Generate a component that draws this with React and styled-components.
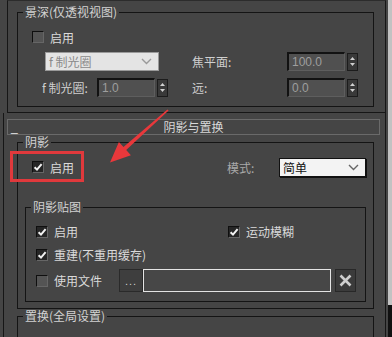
import React from 'react';
import styled, { createGlobalStyle } from 'styled-components';

const GlobalStyle = createGlobalStyle`
  html, body {
    margin: 0;
    padding: 0;
    background: #454545;
  }
  body {
    font-family: "Noto Sans CJK SC", "Noto Sans", sans-serif;
    font-size: 12px;
    color: #d6d6d6;
  }
  * { box-sizing: border-box; }
`;

const Page = styled.div`
  position: relative;
  display: flex;
  width: 392px;
  height: 337px;
  overflow: hidden;
  background: #454545;
`;

const Main = styled.div`
  width: 388px;
  display: flex;
  flex-direction: column;
`;

const ScrollStrip = styled.div`
  width: 4px;
  background: linear-gradient(#c2c2c2 0 305px, #111 305px);
`;

const TopPanel = styled.div`
  margin-left: 7px;
  width: 379px;
  border: 1px solid #161616;
  border-top-color: #2c2c2c;
  padding: 4px 11px 5px 9px;
`;

const Group = styled.fieldset`
  margin: ${({ $m }) => $m || '0'};
  padding: 0;
  min-width: 0;
  border: 1px solid #141414;
  height: ${({ $h }) => ($h ? `${$h}px` : 'auto')};
`;

const Legend = styled.legend`
  margin-left: 5px;
  padding: 0 2px;
  line-height: 14px;
  font-size: 12px;
  color: #d2d2d2;
`;

const DofGrid = styled.div`
  display: grid;
  grid-template-columns: 160px 1fr;
  grid-template-rows: 16px 19px 19px;
  row-gap: 7px;
  padding: 10px 0 9px 14px;
`;

const Cell = styled.div`
  display: flex;
  align-items: center;
  grid-column: ${({ $span }) => ($span ? '1 / span 2' : 'auto')};
  padding-left: ${({ $indent }) => $indent || 0}px;
`;

const Check = styled.label`
  display: flex;
  align-items: center;
  gap: 6px;
  color: #dadada;
  white-space: nowrap;
`;

const Box = styled.span`
  width: 12px;
  height: 12px;
  display: inline-flex;
  align-items: center;
  justify-content: center;
  border: 1px solid;
  border-color: #0f0f0f #666 #666 #0f0f0f;
  background: ${({ $checked }) => ($checked ? '#262626' : '#545454')};
`;

const Label = styled.span`
  width: ${({ $w }) => $w}px;
  color: ${({ $dim }) => ($dim ? '#a9a9a9' : '#cfcfcf')};
  white-space: nowrap;
`;

const Select = styled.div`
  width: ${({ $w }) => $w}px;
  height: 19px;
  display: flex;
  align-items: center;
  justify-content: space-between;
  padding: 0 6px 0 3px;
  background: ${({ $light }) => ($light ? '#f3f3f3' : '#e4e4e4')};
  border: 1px solid ${({ $light }) => ($light ? '#111' : '#9a9a9a')};
  box-shadow: ${({ $light }) => ($light ? '1px 1px 0 #111' : 'none')};
  color: ${({ $light }) => ($light ? '#111' : '#8a8a8a')};
  line-height: 17px;
`;

const NumberField = styled.div`
  width: 58px;
  height: 19px;
  padding-left: 3px;
  display: flex;
  align-items: center;
  background: #505050;
  border-style: solid;
  border-width: 2px 1px 1px 2px;
  border-color: #121212 #5e5e5e #5e5e5e #121212;
  color: #9e9e9e;
  font-family: "Liberation Sans", "Noto Sans", sans-serif;
  font-size: 12px;
`;

const SpinButton = styled.div`
  width: 11px;
  height: 18px;
  margin-left: 2px;
  display: flex;
  flex-direction: column;
  align-items: center;
  justify-content: center;
  gap: 3px;
  background: #393939;
  border: 1px solid #1c1c1c;
`;

const ShadowPanel = styled.div`
  flex: 1;
  margin-left: 3px;
  width: 383px;
  border-left: 1px solid #161616;
  border-right: 1px solid #161616;
`;

const RolloutHeader = styled.div`
  margin: 6px 0 0 3px;
  width: 373px;
  height: 16px;
  display: grid;
  grid-template-columns: 1fr auto 1fr;
  align-items: center;
  padding: 0 3px;
  border: 1px solid #6a6a6a;
  line-height: 14px;
  color: #d8d8d8;
`;

const Minus = styled.span`
  font-family: "Liberation Sans", sans-serif;
  font-size: 12px;
  line-height: 10px;
  color: #e0e0e0;
`;

const GroupsWrap = styled.div`
  padding: 0 11px 0 13px;
`;

const ModeRow = styled.div`
  position: relative;
  height: 20px;
  margin-top: 8px;
  padding: 0 7px 0 14px;
  display: flex;
  align-items: center;
`;

const ModeRight = styled.div`
  margin-left: auto;
  display: flex;
  align-items: center;
`;

const Highlight = styled.div`
  position: absolute;
  left: -8px;
  top: -6px;
  width: 74px;
  height: 31px;
  border: 3px solid #e0393c;
  pointer-events: none;
`;

const MapRows = styled.div`
  display: grid;
  grid-template-rows: 16px 16px 23px;
  row-gap: 7px;
  padding: 9px 9px 9px 10px;
`;

const TwoCol = styled.div`
  display: grid;
  grid-template-columns: 192px 1fr;
  align-items: center;
`;

const FileRow = styled.div`
  display: grid;
  grid-template-columns: 83px 24px 1fr 21px;
  align-items: stretch;
`;

const DotsButton = styled.div`
  display: flex;
  align-items: center;
  justify-content: center;
  background: #3e3e3e;
  border: 1px solid #2a2a2a;
  color: #cfcfcf;
  font-family: "Liberation Sans", sans-serif;
  font-size: 11px;
  letter-spacing: 1px;
`;

const FileField = styled.div`
  margin-right: 4px;
  background: #474747;
  border: 1px solid #e4e4e4;
`;

const ClearButton = styled.div`
  display: flex;
  align-items: center;
  justify-content: center;
  background: #3b3b3b;
  border: 1px solid #282828;
`;

const Arrow = styled.svg`
  position: absolute;
  left: 0;
  top: 0;
  pointer-events: none;
`;

const CheckMark = () => (
  <svg width="10" height="10" viewBox="0 0 10 10">
    <path d="M1.6 5.2 L4 7.6 L8.6 2.2" fill="none" stroke="#f2f2f2" strokeWidth="2" />
  </svg>
);

const Chevron = ({ color }) => (
  <svg width="11" height="7" viewBox="0 0 11 7">
    <path d="M1 1 L5.5 5.5 L10 1" fill="none" stroke={color} strokeWidth="1.4" />
  </svg>
);

const Checkbox = ({ checked, children }) => (
  <Check>
    <Box $checked={checked}>{checked && <CheckMark />}</Box>
    {children}
  </Check>
);

const Spinner = () => (
  <SpinButton>
    <svg width="5" height="3" viewBox="0 0 5 3"><path d="M0 3 L2.5 0 L5 3 Z" fill="#d0d0d0" /></svg>
    <svg width="5" height="3" viewBox="0 0 5 3"><path d="M0 0 L2.5 3 L5 0 Z" fill="#d0d0d0" /></svg>
  </SpinButton>
);

const App = () => (
  <Page>
    <GlobalStyle />
    <Main>
      <TopPanel>
        <Group>
          <Legend>景深(仅透视视图)</Legend>
          <DofGrid>
            <Cell $span>
              <Checkbox>启用</Checkbox>
            </Cell>
            <Cell $indent={13}>
              <Select $w={114}>
                <span>f 制光圈</span>
                <Chevron color="#9a9a9a" />
              </Select>
            </Cell>
            <Cell>
              <Label $w={95}>焦平面:</Label>
              <NumberField>100.0</NumberField>
              <Spinner />
            </Cell>
            <Cell $indent={10}>
              <Label $w={55}>f 制光圈:</Label>
              <NumberField>1.0</NumberField>
              <Spinner />
            </Cell>
            <Cell>
              <Label $w={95}>远:</Label>
              <NumberField>0.0</NumberField>
              <Spinner />
            </Cell>
          </DofGrid>
        </Group>
      </TopPanel>

      <ShadowPanel>
        <RolloutHeader>
          <Minus>_</Minus>
          <span>阴影与置换</span>
          <span />
        </RolloutHeader>
        <GroupsWrap>
          <Group>
            <Legend>阴影</Legend>
            <ModeRow>
              <Checkbox checked>启用</Checkbox>
              <Highlight />
              <ModeRight>
                <Label $w={52} $dim>模式:</Label>
                <Select $w={87} $light>
                  <span>简单</span>
                  <Chevron color="#666" />
                </Select>
              </ModeRight>
            </ModeRow>
            <Group $m="23px 7px 6px 7px">
              <Legend>阴影贴图</Legend>
              <MapRows>
                <TwoCol>
                  <Checkbox checked>启用</Checkbox>
                  <Checkbox checked>运动模糊</Checkbox>
                </TwoCol>
                <TwoCol>
                  <Checkbox checked>重建(不重用缓存)</Checkbox>
                </TwoCol>
                <FileRow>
                  <Checkbox>使用文件</Checkbox>
                  <DotsButton>...</DotsButton>
                  <FileField />
                  <ClearButton>
                    <svg width="13" height="13" viewBox="0 0 13 13">
                      <path d="M1.5 1.5 L11.5 11.5 M11.5 1.5 L1.5 11.5" stroke="#cfcfcf" strokeWidth="2.6" />
                    </svg>
                  </ClearButton>
                </FileRow>
              </MapRows>
            </Group>
          </Group>
          <Group $h={40}>
            <Legend>置换(全局设置)</Legend>
          </Group>
        </GroupsWrap>
      </ShadowPanel>
    </Main>
    <ScrollStrip />

    <Arrow width="392" height="337" viewBox="0 0 392 337">
      <polygon
        points="168.6,110.6 167.4,109.4 123.5,147.1 118.9,141.9 110,162.5 130.9,155.3 126.2,150.1"
        fill="#e8383b"
      />
    </Arrow>
  </Page>
);

export default App;
